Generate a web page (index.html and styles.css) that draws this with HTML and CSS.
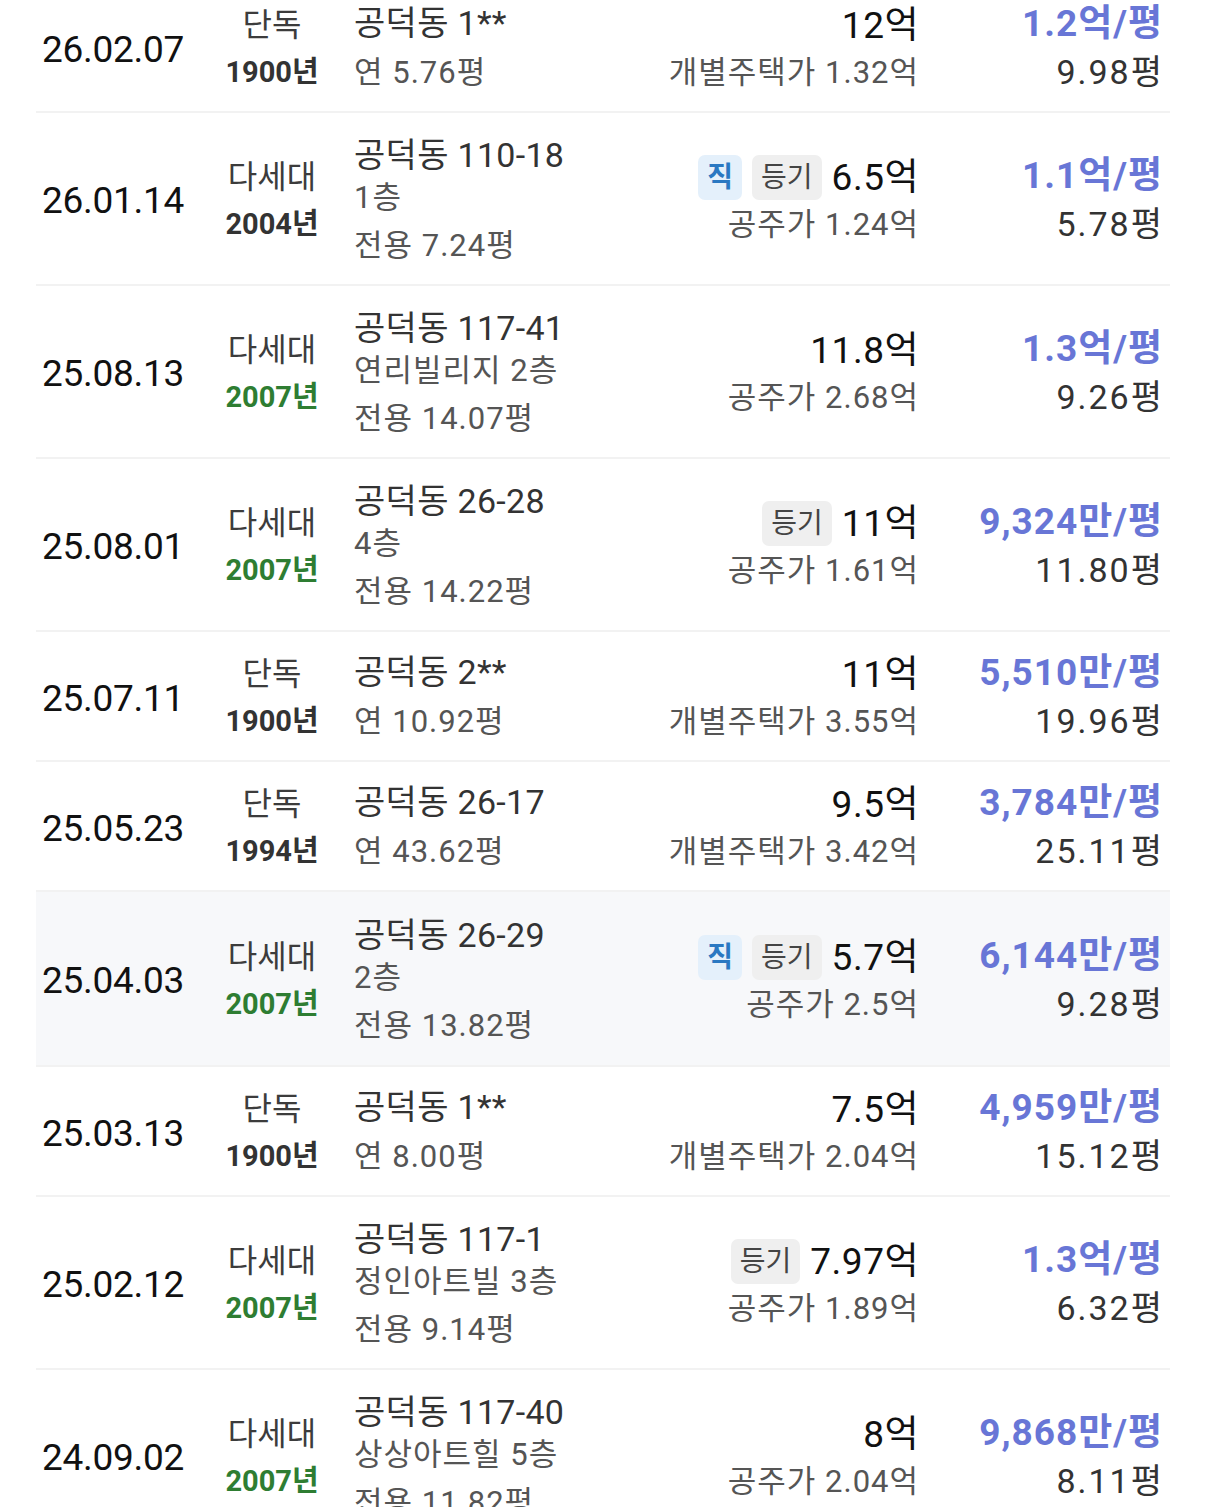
FILE: index.html
```html
<!DOCTYPE html>
<html lang="ko">
<head>
<meta charset="utf-8">
<title>실거래 목록</title>
<link rel="stylesheet" href="styles.css">
</head>
<body>
<div class="list">
  <div class="row">
    <div class="date">26.02.07</div>
    <div class="type"><div class="kind">단독</div><div class="year">1900년</div></div>
    <div class="addr"><div class="main">공덕동 1**</div><div class="sub land">연 5.76평</div></div>
    <div class="price"><div class="amount"><span>12억</span></div><div class="sub">개별주택가 1.32억</div></div>
    <div class="ppy"><div class="per">1.2억/평</div><div class="size">9.98평</div></div>
  </div>
  <div class="row">
    <div class="date">26.01.14</div>
    <div class="type"><div class="kind">다세대</div><div class="year">2004년</div></div>
    <div class="addr three"><div class="main">공덕동 110-18</div><div class="sub floor">1층</div><div class="sub area">전용 7.24평</div></div>
    <div class="price"><div class="amount"><span class="badge direct">직</span><span class="badge reg">등기</span><span>6.5억</span></div><div class="sub">공주가 1.24억</div></div>
    <div class="ppy"><div class="per">1.1억/평</div><div class="size">5.78평</div></div>
  </div>
  <div class="row">
    <div class="date">25.08.13</div>
    <div class="type"><div class="kind">다세대</div><div class="year new">2007년</div></div>
    <div class="addr three"><div class="main">공덕동 117-41</div><div class="sub floor">연리빌리지 2층</div><div class="sub area">전용 14.07평</div></div>
    <div class="price"><div class="amount"><span>11.8억</span></div><div class="sub">공주가 2.68억</div></div>
    <div class="ppy"><div class="per">1.3억/평</div><div class="size">9.26평</div></div>
  </div>
  <div class="row">
    <div class="date">25.08.01</div>
    <div class="type"><div class="kind">다세대</div><div class="year new">2007년</div></div>
    <div class="addr three"><div class="main">공덕동 26-28</div><div class="sub floor">4층</div><div class="sub area">전용 14.22평</div></div>
    <div class="price"><div class="amount"><span class="badge reg">등기</span><span>11억</span></div><div class="sub">공주가 1.61억</div></div>
    <div class="ppy"><div class="per">9,324만/평</div><div class="size">11.80평</div></div>
  </div>
  <div class="row">
    <div class="date">25.07.11</div>
    <div class="type"><div class="kind">단독</div><div class="year">1900년</div></div>
    <div class="addr"><div class="main">공덕동 2**</div><div class="sub land">연 10.92평</div></div>
    <div class="price"><div class="amount"><span>11억</span></div><div class="sub">개별주택가 3.55억</div></div>
    <div class="ppy"><div class="per">5,510만/평</div><div class="size">19.96평</div></div>
  </div>
  <div class="row">
    <div class="date">25.05.23</div>
    <div class="type"><div class="kind">단독</div><div class="year">1994년</div></div>
    <div class="addr"><div class="main">공덕동 26-17</div><div class="sub land">연 43.62평</div></div>
    <div class="price"><div class="amount"><span>9.5억</span></div><div class="sub">개별주택가 3.42억</div></div>
    <div class="ppy"><div class="per">3,784만/평</div><div class="size">25.11평</div></div>
  </div>
  <div class="row active">
    <div class="date">25.04.03</div>
    <div class="type"><div class="kind">다세대</div><div class="year new">2007년</div></div>
    <div class="addr three"><div class="main">공덕동 26-29</div><div class="sub floor">2층</div><div class="sub area">전용 13.82평</div></div>
    <div class="price"><div class="amount"><span class="badge direct">직</span><span class="badge reg">등기</span><span>5.7억</span></div><div class="sub">공주가 2.5억</div></div>
    <div class="ppy"><div class="per">6,144만/평</div><div class="size">9.28평</div></div>
  </div>
  <div class="row">
    <div class="date">25.03.13</div>
    <div class="type"><div class="kind">단독</div><div class="year">1900년</div></div>
    <div class="addr"><div class="main">공덕동 1**</div><div class="sub land">연 8.00평</div></div>
    <div class="price"><div class="amount"><span>7.5억</span></div><div class="sub">개별주택가 2.04억</div></div>
    <div class="ppy"><div class="per">4,959만/평</div><div class="size">15.12평</div></div>
  </div>
  <div class="row">
    <div class="date">25.02.12</div>
    <div class="type"><div class="kind">다세대</div><div class="year new">2007년</div></div>
    <div class="addr three"><div class="main">공덕동 117-1</div><div class="sub floor">정인아트빌 3층</div><div class="sub area">전용 9.14평</div></div>
    <div class="price"><div class="amount"><span class="badge reg">등기</span><span>7.97억</span></div><div class="sub">공주가 1.89억</div></div>
    <div class="ppy"><div class="per">1.3억/평</div><div class="size">6.32평</div></div>
  </div>
  <div class="row">
    <div class="date">24.09.02</div>
    <div class="type"><div class="kind">다세대</div><div class="year new">2007년</div></div>
    <div class="addr three"><div class="main">공덕동 117-40</div><div class="sub floor">상상아트힐 5층</div><div class="sub area">전용 11.82평</div></div>
    <div class="price"><div class="amount"><span>8억</span></div><div class="sub">공주가 2.04억</div></div>
    <div class="ppy"><div class="per">9,868만/평</div><div class="size">8.11평</div></div>
  </div>
</div>
</body>
</html>
```
FILE: styles.css
```css
html, body {
  margin: 0;
  padding: 0;
  background: #ffffff;
}
body {
  font-family: Roboto, "Noto Sans CJK KR", "Noto Sans", sans-serif;
  color: #111;
  overflow: hidden;
}
.list {
  margin: -17px 36px 0 36px;
  width: 1134px;
}
.row {
  display: grid;
  grid-template-columns: 154px 164px 1fr auto 244px;
  align-items: center;
  padding: 19px 8px 15px 0;
  border-bottom: 2px solid #f2f2f2;
  box-sizing: border-box;
}
.row.active {
  background: #f7f8fa;
  padding-top: 20px;
  padding-bottom: 16px;
}
.date {
  text-align: center;
  font-size: 37px;
  letter-spacing: -0.3px;
  color: #111;
}
.type {
  text-align: center;
}
.kind {
  font-size: 32px;
  line-height: 46px;
  color: #3c3c3c;
}
.year {
  font-size: 29px;
  line-height: 48px;
  font-weight: 700;
  color: #333;
}
.year.new {
  color: #2e7d32;
}
.addr.three {
  margin-top: 2px;
  margin-bottom: -2px;
}
.main {
  font-size: 34px;
  line-height: 42px;
  color: #333;
  letter-spacing: 0.3px;
}
.sub {
  font-size: 31px;
  color: #555;
  letter-spacing: 1px;
}
.floor {
  line-height: 44px;
}
.area {
  line-height: 51px;
}
.land {
  margin-top: 6px;
  line-height: 46px;
}
.price {
  text-align: right;
  margin-right: -1px;
}
.amount {
  display: flex;
  justify-content: flex-end;
  align-items: center;
  gap: 10px;
  font-size: 37px;
  line-height: 47px;
  letter-spacing: 0.5px;
  color: #111;
}
.price .sub {
  line-height: 47px;
}
.badge {
  display: inline-flex;
  align-items: center;
  justify-content: center;
  height: 45px;
  padding: 0 9px;
  border-radius: 7px;
  font-size: 28px;
  line-height: 45px;
  letter-spacing: 0;
}
.badge.direct {
  background: #e4f0fb;
  color: #2a78c2;
  font-weight: 700;
  width: 44px;
  padding: 0;
  box-sizing: border-box;
}
.badge.reg {
  background: #efefef;
  color: #444;
}
.ppy {
  text-align: right;
}
.per {
  font-size: 37px;
  line-height: 44px;
  font-weight: 700;
  letter-spacing: 1px;
  margin-right: -1px;
  color: #6876d6;
}
.size {
  font-size: 34px;
  margin-top: 3px;
  line-height: 47px;
  letter-spacing: 2px;
  margin-right: -2px;
  color: #333;
}
```
